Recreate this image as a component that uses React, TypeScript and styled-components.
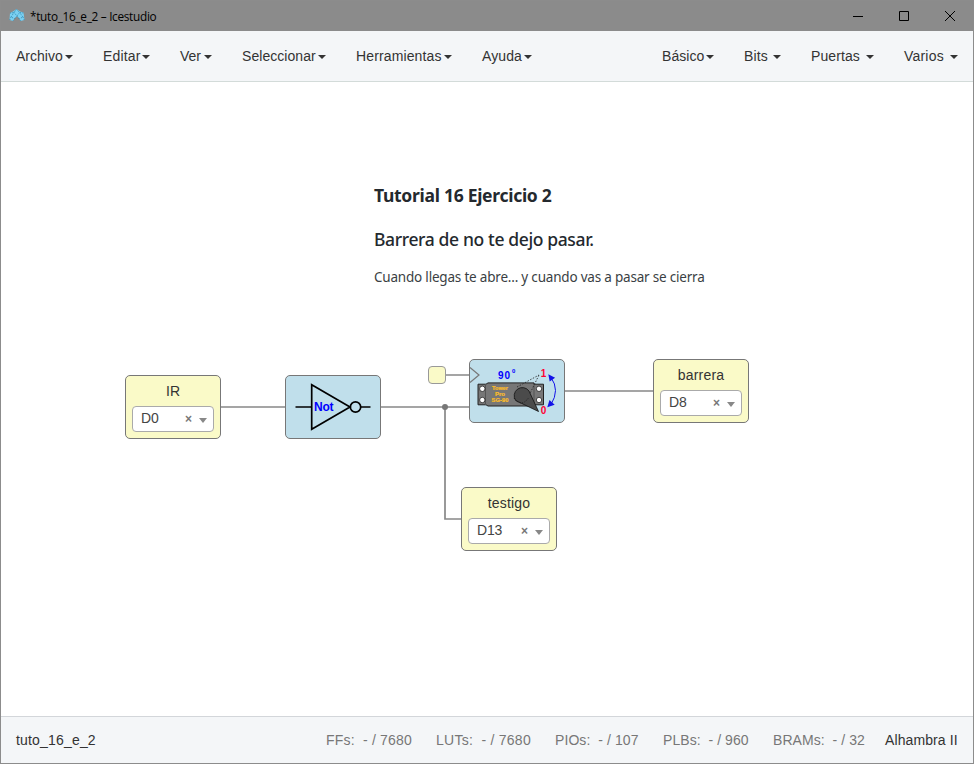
import React from 'react';
import styled, { createGlobalStyle } from 'styled-components';

const GlobalStyle = createGlobalStyle`
  *, *::before, *::after { box-sizing: border-box; }
  body { margin: 0; background: #fff; }
`;

const Window = styled.div`
  width: 974px;
  height: 764px;
  display: flex;
  flex-direction: column;
  border: 1px solid #8c8c8c;
  background: #fff;
  overflow: hidden;
  font: 14px/20px "Liberation Sans", Arial, sans-serif;
  color: #333;
`;

const TitleBar = styled.header`
  flex: 0 0 30px;
  display: flex;
  align-items: center;
  background: #8b8b8b;
  color: #000;
  padding-left: 8px;
`;

const WindowTitle = styled.span`
  flex: 1;
  margin-left: 5px;
  font: 11.8px/16px "Open Sans", "Noto Sans", sans-serif;
  letter-spacing: -0.3px;
`;

const WindowButton = styled.span`
  width: 46px;
  height: 30px;
  display: flex;
  align-items: center;
  justify-content: center;
`;

const MenuBar = styled.nav`
  flex: 0 0 51px;
  display: flex;
  justify-content: space-between;
  padding: 0 15px;
  background: #f4f6f8;
  border-bottom: 1px solid #d3dbd9;
`;

const MenuGroup = styled.div`
  display: flex;
  align-items: center;
  gap: 30px;
`;

const MenuItem = styled.div<{ $width: number; $spacing: number }>`
  width: ${(p) => p.$width}px;
  letter-spacing: ${(p) => p.$spacing}px;
  display: flex;
  align-items: center;
  justify-content: space-between;
  white-space: nowrap;
`;

const Caret = styled.i`
  border: 4px solid transparent;
  border-top-color: #333;
  border-bottom: 0;
  margin-top: 2px;
`;

const Canvas = styled.main`
  flex: 1;
  position: relative;
`;

const Placed = styled.div<{ $x: number; $y: number }>`
  position: absolute;
  left: ${(p) => p.$x}px;
  top: ${(p) => p.$y}px;
`;

const Wires = styled.svg`
  position: absolute;
  inset: 0;
`;

const Notes = styled(Placed)`
  color: #24292e;
  font-family: "Noto Sans", "Open Sans", sans-serif;
  white-space: nowrap;
`;

const NoteTitle = styled.h1`
  margin: 0;
  font-size: 17.5px;
  line-height: 24px;
  font-weight: 700;
  letter-spacing: -0.28px;
`;

const NoteSubtitle = styled.h2`
  margin: 20px 0 0;
  font-size: 17.5px;
  line-height: 24px;
  font-weight: 500;
  letter-spacing: -0.37px;
`;

const NoteText = styled.p`
  margin: 16px 0 0;
  font-size: 13.5px;
  line-height: 20px;
  letter-spacing: -0.2px;
  color: #3a3f44;
`;

const Block = styled(Placed)<{ $kind: 'io' | 'logic' }>`
  width: 96px;
  height: 64px;
  border: 1px solid #777;
  border-radius: 5px;
  background: ${(p) => (p.$kind === 'io' ? '#fafac8' : '#c0dfeb')};
`;

const IoBlock = styled(Block)`
  display: flex;
  flex-direction: column;
  align-items: center;
  padding: 5px 6px 6px;
`;

const IoLabel = styled.span<{ $spacing: number }>`
  height: 25px;
  letter-spacing: ${(p) => p.$spacing}px;
`;

const PinSelect = styled.div`
  width: 82px;
  height: 26px;
  display: flex;
  align-items: center;
  border: 1px solid #aaa;
  border-radius: 4px;
  background: #fff;
  padding: 0 6px 0 8px;
  color: #444;
`;

const PinName = styled.span`
  flex: 1;
  margin-top: -2px;
  letter-spacing: -0.2px;
`;

const ClearMark = styled.b`
  font-size: 12px;
  color: #777;
  margin-right: 7px;
`;

const SelectArrow = styled.i`
  border: 4px solid transparent;
  border-top: 5px solid #888;
  border-bottom: 0;
  margin-top: 3px;
`;

const ClockStub = styled(Placed)`
  width: 18px;
  height: 18px;
  border: 1.5px solid #999;
  border-radius: 4px;
  background: #fafac8;
`;

const Drawing = styled.svg`
  display: block;
  margin: -1px;
`;

const StatusBar = styled.footer`
  flex: 0 0 47px;
  display: flex;
  align-items: center;
  padding: 0 15px;
  background: #f4f6f8;
  border-top: 1px solid #d3d6da;
  white-space: pre;
`;

const ProjectName = styled.span`
  width: 310px;
  letter-spacing: 0.18px;
`;

const Resource = styled.span<{ $width: number; $spacing: number }>`
  width: ${(p) => p.$width}px;
  letter-spacing: ${(p) => p.$spacing}px;
  color: #777;
`;

const Board = styled.span`
  letter-spacing: 0.1px;
`;

type Menu = { label: string; width: number; spacing: number };

const mainMenus: Menu[] = [
  { label: 'Archivo', width: 57, spacing: 0 },
  { label: 'Editar', width: 47, spacing: 0.15 },
  { label: 'Ver', width: 32, spacing: 0 },
  { label: 'Seleccionar', width: 84, spacing: 0.05 },
  { label: 'Herramientas', width: 96, spacing: 0.13 },
  { label: 'Ayuda', width: 50, spacing: 0.1 },
];

const blockMenus: Menu[] = [
  { label: 'Básico', width: 52, spacing: 0.05 },
  { label: 'Bits', width: 37, spacing: 0.1 },
  { label: 'Puertas', width: 63, spacing: 0.1 },
  { label: 'Varios', width: 54, spacing: 0.2 },
];

const resources = [
  { text: 'FFs:  - / 7680', width: 110, spacing: 0.2 },
  { text: 'LUTs:  - / 7680', width: 119, spacing: 0.26 },
  { text: 'PIOs:  - / 107', width: 108, spacing: 0.08 },
  { text: 'PLBs:  - / 960', width: 110, spacing: 0.06 },
  { text: 'BRAMs:  - / 32', width: 112, spacing: 0.06 },
];

const pins = [
  { label: 'IR', pin: 'D0', x: 124, y: 293, spacing: 0 },
  { label: 'barrera', pin: 'D8', x: 652, y: 277, spacing: 0.2 },
  { label: 'testigo', pin: 'D13', x: 460, y: 405, spacing: 0.2 },
];

const MenuList = ({ menus }: { menus: Menu[] }) => (
  <MenuGroup>
    {menus.map((m) => (
      <MenuItem key={m.label} $width={m.width} $spacing={m.spacing}>
        {m.label}
        <Caret />
      </MenuItem>
    ))}
  </MenuGroup>
);

const AppIcon = () => (
  <svg width="16" height="16" viewBox="0 0 16 16">
    <path d="M1 5 4 3.5 7.5 1 11 3.5 14.5 4.5 15.5 12 11.5 13 10 10 8 8.5 5.8 10 4 13 .5 12Z" fill="#7bd0f2" />
    <path d="M1 5.2 5 4.5 7.5 1.2 10.5 4.5 14.5 5M5 4.5 8 8l2.5-3.5M2 9l3-4.5M14 9l-3.5-4.5M4 12.7 8 8l3.8 4.8M.7 12 2 9l3.2 1.5M15.3 12 14 9l-3.2 1.5" fill="none" stroke="#277fa8" strokeWidth=".7" strokeDasharray="1.2 1" />
  </svg>
);

const NotGate = () => (
  <Drawing width="96" height="64" viewBox="0 0 96 64">
    <g fill="none" stroke="#000" strokeWidth="1.7">
      <path d="M10.5 32H26.5M76 32h9.5" />
      <path d="M26.7 9.8v44.4L65 32Z" />
      <circle cx="70.5" cy="32" r="5.2" />
    </g>
    <text x="29" y="36" fill="#00f" fontSize="12" fontWeight="700" textLength="19.5">Not</text>
  </Drawing>
);

const Servo = () => (
  <Drawing width="96" height="64" viewBox="0 0 96 64">
    <path d="M1 8.5 10 16 1 23.5" fill="none" stroke="#777" strokeWidth="1.2" />
    <path d="M9 25.2H17l2-1.3H65v1.3h9.5v20.6H65v1.2H19l-2-1.2H9Z" fill="#777" stroke="#222" strokeWidth="1" />
    <path d="M16.5 25v21M65 25v21" stroke="#555" strokeWidth="1" />
    <g fill="#fff" stroke="#222" strokeWidth=".8">
      <circle cx="13.3" cy="29.8" r="2.7" />
      <circle cx="13.3" cy="41" r="2.7" />
      <circle cx="70" cy="29.8" r="2.7" />
      <circle cx="70" cy="41" r="2.7" />
    </g>
    <path d="M48 28 70 16M60 36.5 70 16" fill="none" stroke="#222" strokeWidth=".8" strokeDasharray="1.5 1.5" />
    <path d="M46.7 41.5A8 8 0 1 1 60 32L69.5 52.5Z" fill="#4b4b4b" stroke="#111" strokeWidth=".8" />
    <path d="M45 39Q52 49 59.5 39" fill="none" stroke="#111" strokeWidth=".8" strokeDasharray="1 1.5" />
    <g fill="#fcbd28" stroke="#fcbd28" strokeWidth=".2" fontSize="6" fontWeight="700" textAnchor="middle">
      <text x="31" y="30.8" textLength="16" lengthAdjust="spacingAndGlyphs">Tower</text>
      <text x="31" y="36.8">Pro</text>
      <text x="31" y="42.8" textLength="17" lengthAdjust="spacingAndGlyphs">SG-90</text>
    </g>
    <g fill="#00f" fontWeight="700">
      <text x="29" y="20" fontSize="10" textLength="12">90</text>
      <text x="43" y="14" fontSize="6">0</text>
    </g>
    <g fill="#ff0033" fontSize="10" fontWeight="700">
      <text x="71.8" y="18.3">1</text>
      <text x="71.8" y="55">0</text>
    </g>
    <path d="M82 18.5Q91 31 82 45.5" fill="none" stroke="#1212e8" strokeWidth="1" />
    <path d="m79.3 15.2 6.8 3.6-5.4 3.7ZM78.3 48.2l2.2-7.1 5.2 4.6Z" fill="#1212e8" />
  </Drawing>
);

export default function App() {
  return (
    <>
      <GlobalStyle />
      <Window>
        <TitleBar>
          <AppIcon />
          <WindowTitle>*tuto_16_e_2 – Icestudio</WindowTitle>
          <WindowButton>
            <svg width="10" height="10"><path d="M0 5.5h10" stroke="#000" /></svg>
          </WindowButton>
          <WindowButton>
            <svg width="10" height="10"><path d="M.5.5h9v9h-9z" fill="none" stroke="#000" /></svg>
          </WindowButton>
          <WindowButton>
            <svg width="10" height="10"><path d="m0 0 10 10M10 0 0 10" stroke="#000" /></svg>
          </WindowButton>
        </TitleBar>
        <MenuBar>
          <MenuList menus={mainMenus} />
          <MenuList menus={blockMenus} />
        </MenuBar>
        <Canvas>
          <Wires width="972" height="634">
            <g fill="none" stroke="#888" strokeWidth="1.7">
              <path d="M220 325h64M380 325h88M444 293h24M564 309h88M444 325V437h16" />
            </g>
            <circle cx="444" cy="325" r="3" fill="#777" />
          </Wires>
          <Notes $x={373} $y={101}>
            <NoteTitle>Tutorial 16 Ejercicio 2</NoteTitle>
            <NoteSubtitle>Barrera de no te dejo pasar.</NoteSubtitle>
            <NoteText>Cuando llegas te abre... y cuando vas a pasar se cierra</NoteText>
          </Notes>
          {pins.map((p) => (
            <IoBlock key={p.label} $kind="io" $x={p.x} $y={p.y}>
              <IoLabel $spacing={p.spacing}>{p.label}</IoLabel>
              <PinSelect>
                <PinName>{p.pin}</PinName>
                <ClearMark>×</ClearMark>
                <SelectArrow />
              </PinSelect>
            </IoBlock>
          ))}
          <Block $kind="logic" $x={284} $y={293}><NotGate /></Block>
          <ClockStub $x={427} $y={284} />
          <Block $kind="logic" $x={468} $y={277}><Servo /></Block>
        </Canvas>
        <StatusBar>
          <ProjectName>tuto_16_e_2</ProjectName>
          {resources.map((r) => (
            <Resource key={r.text} $width={r.width} $spacing={r.spacing}>{r.text}</Resource>
          ))}
          <Board>Alhambra II</Board>
        </StatusBar>
      </Window>
    </>
  );
}
